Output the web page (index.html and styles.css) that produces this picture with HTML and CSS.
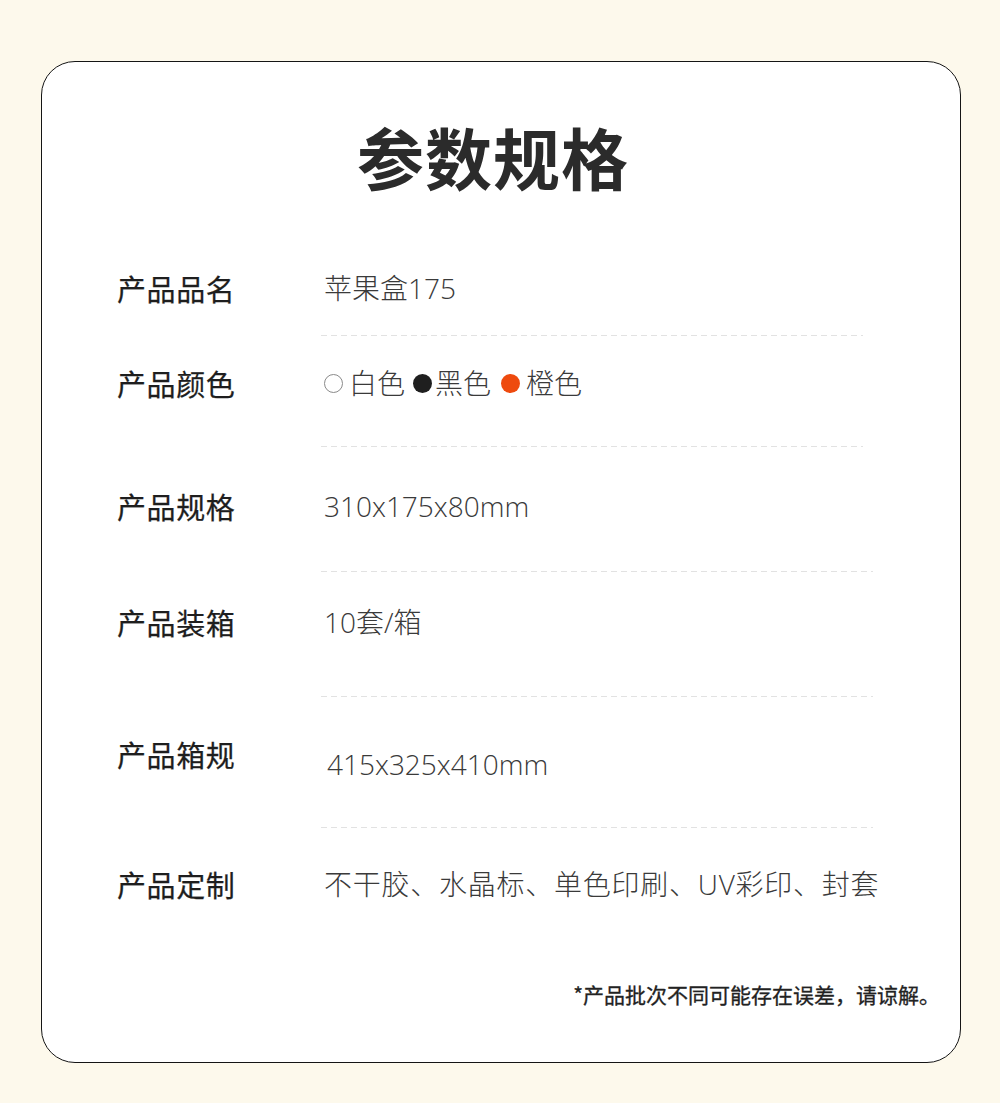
FILE: index.html
```html
<!DOCTYPE html>
<html lang="zh-CN">
<head>
<meta charset="utf-8">
<title>参数规格</title>
<link rel="stylesheet" href="styles.css">
</head>
<body>
<div class="card">
  <h1 class="title">参数规格</h1>
  <div class="specs">
    <div class="row row-1">
      <div class="label">产品品名</div>
      <div class="value">苹果盒175</div>
    </div>
    <div class="divider divider-short d1"></div>
    <div class="row row-2">
      <div class="label">产品颜色</div>
      <div class="value colors">
        <span class="dot dot-white"></span><span class="cname">白色</span><span class="dot dot-black"></span><span class="cname">黑色</span><span class="dot dot-orange"></span><span class="cname">橙色</span>
      </div>
    </div>
    <div class="divider divider-short d2"></div>
    <div class="row row-3">
      <div class="label">产品规格</div>
      <div class="value">310x175x80mm</div>
    </div>
    <div class="divider d3"></div>
    <div class="row row-4">
      <div class="label">产品装箱</div>
      <div class="value">10套/箱</div>
    </div>
    <div class="divider d4"></div>
    <div class="row row-5">
      <div class="label">产品箱规</div>
      <div class="value value-low">415x325x410mm</div>
    </div>
    <div class="divider d5"></div>
    <div class="row row-6">
      <div class="label">产品定制</div>
      <div class="value value-wide">不干胶、水晶标、单色印刷、UV彩印、封套</div>
    </div>
  </div>
  <p class="note">*产品批次不同可能存在误差，请谅解。</p>
</div>
</body>
</html>
```

FILE: styles.css
```css
* { box-sizing: border-box; }
html, body { margin: 0; padding: 0; }
body {
  background: #fdf9ec;
  font-family: "Noto Sans CJK SC", "Noto Sans", sans-serif;
  color: #222;
  padding: 61px 39px 40px 41px;
}
.card {
  width: 920px;
  height: 1002px;
  background: #fff;
  border: 1.5px solid #151515;
  border-radius: 34px;
  padding: 54px 20px 0 75px;
  display: flex;
  flex-direction: column;
}
.title {
  margin: 0;
  text-align: center;
  font-size: 67px;
  line-height: 80px;
  font-weight: 700;
  color: #2b2b2b;
  letter-spacing: 1px;
  padding-right: 71px;
}
.specs {
  display: flex;
  flex-direction: column;
  margin-top: 72px;
}
.row {
  display: grid;
  grid-template-columns: 207px 1fr;
  align-items: start;
  line-height: 40px;
}
.label {
  font-size: 29px;
  font-weight: 400;
  color: #1e1e1e;
  letter-spacing: 0.6px;
  -webkit-text-stroke: 0.25px #1e1e1e;
}
.value {
  font-family: "Open Sans", "Noto Sans CJK SC", sans-serif;
  font-size: 28px;
  font-weight: 300;
  color: #3a3a3a;
}
.value-low { margin-top: 10px; padding-left: 3px; }
.value-wide { letter-spacing: 0.75px; }
.divider {
  height: 1px;
  margin-left: 204px;
  width: 552px;
  background: repeating-linear-gradient(90deg, #e2e2e2 0 6px, transparent 6px 10px);
}
.divider-short { width: 542px; }
.d1 { margin-top: 27px; }
.row-2 { margin-top: 27px; }
.d2 { margin-top: 43px; }
.row-3 { margin-top: 39px; }
.d3 { margin-top: 45px; }
.row-4 { margin-top: 30px; }
.d4 { margin-top: 54px; }
.row-5 { margin-top: 37px; }
.d5 { margin-top: 43px; }
.row-6 { margin-top: 36px; }
.colors { display: flex; align-items: center; }
.dot {
  width: 19px;
  height: 19px;
  border-radius: 50%;
  flex: none;
}
.dot-white { border: 1.5px solid #8a8a8a; background: #fff; margin-right: 6px; }
.dot-black { background: #1f1f1f; margin-left: 8px; margin-right: 3px; }
.dot-orange { background: #ee4a0e; margin-left: 10px; margin-right: 6px; }
.note {
  margin: 75px 0 0;
  text-align: right;
  font-size: 21px;
  line-height: 30px;
  font-weight: 400;
  color: #222;
  -webkit-text-stroke: 0.3px #222;
}
```
